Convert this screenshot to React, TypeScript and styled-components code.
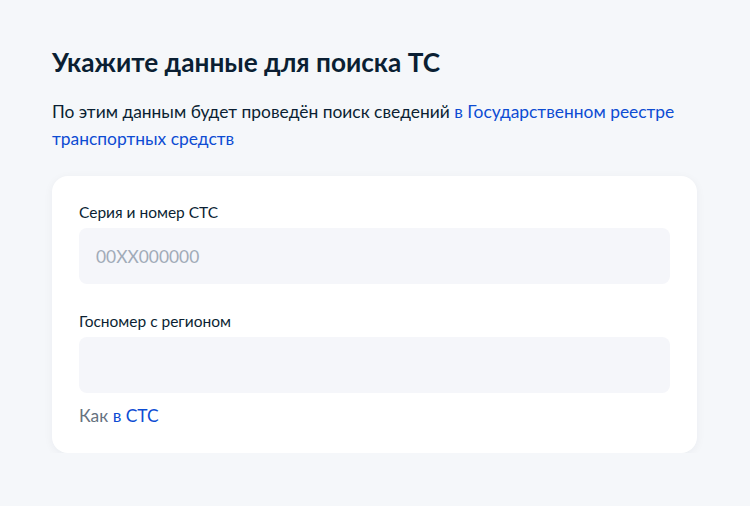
import React from "react";
import styled, { createGlobalStyle } from "styled-components";

const Global = createGlobalStyle`
  html, body { margin: 0; padding: 0; }
  body {
    background: #f5f7fa;
    font-family: Lato, "Noto Sans", sans-serif;
    color: #0b1f33;
  }
`;

const Page = styled.main`
  width: 645px;
  padding: 44px 0 0 52px;
  box-sizing: content-box;
`;

const Title = styled.h1`
  margin: 0;
  font-size: 26.2px;
  line-height: 36px;
  font-weight: 700;
  color: #0b1f33;
`;

const Lead = styled.p`
  margin: 18px 0 0;
  font-size: 17.4px;
  line-height: 27px;
  color: #0b1f33;
`;

const Link = styled.a`
  color: #0d4cd3;
  text-decoration: none;
`;

const Card = styled.section`
  margin-top: 24px;
  background: #ffffff;
  border-radius: 16px;
  box-shadow: 0 2px 10px rgba(11, 31, 51, 0.05);
  padding: 26px 27px 25px;
  display: flex;
  flex-direction: column;
`;

const Field = styled.div<{ $gap?: number }>`
  display: flex;
  flex-direction: column;
  margin-top: ${(p) => p.$gap ?? 0}px;
`;

const Label = styled.label`
  font-size: 15.5px;
  line-height: 20px;
  color: #0b1f33;
  margin-bottom: 6px;
`;

const Input = styled.input`
  height: 56px;
  box-sizing: border-box;
  border: none;
  outline: none;
  border-radius: 8px;
  background: #f5f6fa;
  padding: 0 17px;
  font-family: Lato, "Noto Sans", sans-serif;
  font-size: 17.4px;
  color: #0b1f33;
  &::placeholder { color: #a1abb8; }
`;

const Hint = styled.div`
  margin-top: 11px;
  font-size: 17.4px;
  line-height: 24px;
  color: #66727f;
`;

export default function App() {
  return (
    <>
      <Global />
      <Page>
        <Title>Укажите данные для поиска ТС</Title>
        <Lead>
          По этим данным будет проведён поиск сведений{" "}
          <Link href="#">в Государственном реестре транспортных средств</Link>
        </Lead>
        <Card>
          <Field>
            <Label>Серия и номер СТС</Label>
            <Input placeholder="00XX000000" />
          </Field>
          <Field $gap={27}>
            <Label>Госномер с регионом</Label>
            <Input />
          </Field>
          <Hint>
            Как <Link href="#">в СТС</Link>
          </Hint>
        </Card>
      </Page>
    </>
  );
}
